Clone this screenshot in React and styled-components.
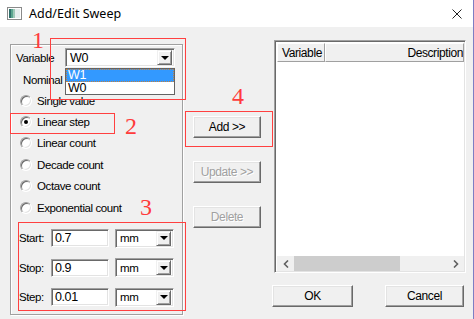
import styled, { createGlobalStyle } from "styled-components";

const GlobalStyle = createGlobalStyle`
  body {
    margin: 0;
    font-family: "Liberation Sans", Arial, sans-serif;
    font-size: 11.5px;
    letter-spacing: -0.4px;
    color: #000;
  }
`;

const Window = styled.div`
  position: relative;
  width: 473px;
  height: 319px;
  background: #f0f0f0;
  border-right: 1px solid #7e7ec4;
  overflow: hidden;
`;

const TitleBar = styled.div`
  height: 27px;
  background: #fff;
  display: flex;
  align-items: center;
  padding-left: 7px;
`;

const TitleText = styled.span`
  margin-left: 7px;
  font-family: "Noto Sans", "Open Sans", sans-serif;
  font-size: 12.5px;
  letter-spacing: 0;
  color: #000;
`;

const CloseIcon = styled.svg`
  margin-left: auto;
  margin-right: 11px;
`;

const Body = styled.div`
  display: flex;
  padding: 17px 0 0 10px;
`;

const GroupBox = styled.div`
  box-sizing: border-box;
  width: 173px;
  height: 271px;
  border: 1px solid #a0a0a0;
  box-shadow: inset 1px 1px 0 #fff, 1px 1px 0 #fff;
  padding-top: 3px;
`;

const FieldRow = styled.div`
  display: flex;
  align-items: center;
  padding-left: ${(p) => p.$indent || 0}px;
  height: ${(p) => p.$height || 19}px;
`;

const Label = styled.span`
  width: ${(p) => p.$width}px;
  flex: none;
`;

const sunken = `
  box-sizing: border-box;
  background: #fff;
  border: 1px solid;
  border-color: #a0a0a0 #fff #fff #a0a0a0;
  box-shadow: inset 1px 1px 0 #696969, inset -1px -1px 0 #e3e3e3;
`;

const Combo = styled.div`
  ${sunken}
  width: ${(p) => p.$width}px;
  height: 19px;
  margin-left: ${(p) => p.$gap || 0}px;
  display: flex;
  align-items: center;
  padding: 0 2px 0 4px;
  flex: none;
`;

const ComboValue = styled.span`
  flex: 1;
  font-size: ${(p) => p.$size || 11.5}px;
`;

const DropButton = styled.div`
  width: 15px;
  height: 15px;
  box-sizing: border-box;
  background: #f0f0f0;
  border: 1px solid;
  border-color: #f0f0f0 #696969 #696969 #f0f0f0;
  box-shadow: inset 1px 1px 0 #fff, inset -1px -1px 0 #a0a0a0;
  display: flex;
  align-items: center;
  justify-content: center;
`;

const Arrow = styled.span`
  width: 0;
  height: 0;
  border-left: 4px solid transparent;
  border-right: 4px solid transparent;
  border-top: 4px solid #000;
`;

const TextBox = styled.div`
  ${sunken}
  width: 58px;
  height: 18px;
  padding-left: 3px;
  display: flex;
  align-items: center;
  font-size: 12.5px;
  flex: none;
`;

const NominalText = styled.div`
  margin-left: 12px;
  width: 42px;
  height: 20px;
  margin-top: 3px;
  line-height: 20px;
  white-space: nowrap;
  overflow: hidden;
`;

const RadioRow = styled.div`
  display: flex;
  align-items: center;
  height: 21.4px;
  padding-left: 9px;
  gap: 5px;
`;

const RadioCircle = styled.span`
  width: 12px;
  height: 12px;
  border-radius: 50%;
  box-sizing: border-box;
  background: #fff;
  border: 1px solid;
  border-color: #a0a0a0 #fff #fff #a0a0a0;
  box-shadow: inset 1px 1px 0 #696969, inset -1px -1px 0 #e3e3e3;
  display: flex;
  align-items: center;
  justify-content: center;

  &::after {
    content: "";
    width: 4px;
    height: 4px;
    border-radius: 50%;
    background: ${(p) => (p.$checked ? "#000" : "transparent")};
  }
`;

const ValueRows = styled.div`
  margin-top: 11px;
  display: flex;
  flex-direction: column;
  gap: 11.5px;
`;

const ButtonColumn = styled.div`
  display: flex;
  flex-direction: column;
  margin-left: 10px;
  padding-top: 72px;
  gap: 23px;
`;

const Button = styled.div`
  width: ${(p) => p.$width || 68}px;
  height: 22px;
  box-sizing: border-box;
  background: #f0f0f0;
  border: 1px solid;
  border-color: #fff #696969 #696969 #fff;
  box-shadow: inset -1px -1px 0 #a0a0a0, inset 1px 1px 0 #e3e3e3;
  display: flex;
  align-items: center;
  justify-content: center;
  font-size: 12px;
  color: ${(p) => (p.$disabled ? "#a0a0a0" : "#000")};
  text-shadow: ${(p) => (p.$disabled ? "1px 1px 0 #fff" : "none")};
`;

const RightColumn = styled.div`
  margin-left: 13px;
  margin-top: -4px;
  display: flex;
  flex-direction: column;
`;

const ListView = styled.div`
  ${sunken}
  width: 192px;
  height: 233px;
  display: flex;
  flex-direction: column;
  padding: 2px 1px 1px 2px;
`;

const HeaderRow = styled.div`
  display: flex;
  height: 19px;
  background: #f0f0f0;
`;

const HeaderCell = styled.div`
  box-sizing: border-box;
  width: ${(p) => (p.$width ? `${p.$width}px` : "auto")};
  flex: ${(p) => (p.$width ? "none" : 1)};
  border: 1px solid;
  border-color: #fff #a0a0a0 #a0a0a0 #fff;
  display: flex;
  align-items: center;
  justify-content: ${(p) => (p.$right ? "flex-end" : "flex-start")};
  padding: ${(p) => (p.$right ? "0" : "0 0 0 4px")};
  font-size: 12px;
  overflow: hidden;
  white-space: nowrap;
`;

const ListArea = styled.div`
  flex: 1;
  background: #fff;
`;

const ScrollBar = styled.div`
  height: 15px;
  background: #f0f0f0;
  display: flex;
  align-items: stretch;
`;

const ScrollArrow = styled.div`
  width: 17px;
  display: flex;
  align-items: center;
  justify-content: center;
`;

const ScrollTrack = styled.div`
  flex: 1;
  display: flex;
`;

const ScrollThumb = styled.div`
  width: 106px;
  background: #cdcdcd;
`;

const DialogButtons = styled.div`
  display: flex;
  justify-content: space-between;
  margin-top: 12px;
  margin-left: -2px;
  width: 192px;
`;

const DropList = styled.div`
  position: absolute;
  left: 65px;
  top: 68px;
  width: 110px;
  height: 27px;
  box-sizing: border-box;
  background: #fff;
  border: 1px solid #646464;
`;

const DropItem = styled.div`
  height: 12.5px;
  line-height: 12.5px;
  padding-left: 2px;
  font-size: 12.5px;
  box-sizing: border-box;
  background: ${(p) => (p.$active ? "#3399ff" : "#fff")};
  color: ${(p) => (p.$active ? "#fff" : "#000")};
  outline: ${(p) => (p.$active ? "1px dotted #c08040" : "none")};
  outline-offset: -1px;
`;

const Mark = styled.div`
  position: absolute;
  left: ${(p) => p.$x}px;
  top: ${(p) => p.$y}px;
  width: ${(p) => p.$w}px;
  height: ${(p) => p.$h}px;
  border: 1px solid #ff4040;
  box-sizing: border-box;
  pointer-events: none;
`;

const MarkNumber = styled.span`
  position: absolute;
  left: ${(p) => p.$x}px;
  top: ${(p) => p.$y}px;
  font-family: "Liberation Serif", "Times New Roman", serif;
  font-size: 24px;
  line-height: 24px;
  letter-spacing: 0;
  color: #ff3b3b;
`;

const radios = [
  "Single value",
  "Linear step",
  "Linear count",
  "Decade count",
  "Octave count",
  "Exponential count",
];

const values = [
  { label: "Start:", value: "0.7" },
  { label: "Stop:", value: "0.9" },
  { label: "Step:", value: "0.01" },
];

const Chevron = ({ dir }) => (
  <svg width="6" height="8" viewBox="0 0 6 8">
    <path
      d={dir === "left" ? "M5 0.5 L1.5 4 L5 7.5" : "M1 0.5 L4.5 4 L1 7.5"}
      fill="none"
      stroke="#606060"
      strokeWidth="1.6"
    />
  </svg>
);

const App = () => {
  return (
    <>
      <GlobalStyle />
      <Window>
        <TitleBar>
          <svg width="15" height="13" viewBox="0 0 15 13">
            <rect x="0.5" y="0.5" width="14" height="12" fill="#fff" stroke="#8a8a8a" />
            <rect x="2" y="2" width="2" height="9" fill="#2f6f6a" />
            <rect x="4" y="2" width="2" height="9" fill="#5aa58f" />
            <rect x="6" y="2" width="2" height="9" fill="#9fc9b8" />
            <rect x="8" y="2" width="5" height="9" fill="#e6eeee" />
          </svg>
          <TitleText>Add/Edit Sweep</TitleText>
          <CloseIcon width="10" height="10" viewBox="0 0 10 10">
            <path d="M0.5 0.5 L9.5 9.5 M9.5 0.5 L0.5 9.5" stroke="#222" strokeWidth="1" />
          </CloseIcon>
        </TitleBar>

        <Body>
          <GroupBox>
            <FieldRow $indent={5}>
              <Label $width={49}>Variable</Label>
              <Combo $width={110}>
                <ComboValue $size={12.5}>W0</ComboValue>
                <DropButton>
                  <Arrow />
                </DropButton>
              </Combo>
            </FieldRow>
            <NominalText>Nominal value</NominalText>
            {radios.map((r) => (
              <RadioRow key={r}>
                <RadioCircle $checked={r === "Linear step"} />
                {r}
              </RadioRow>
            ))}
            <ValueRows>
              {values.map((v) => (
                <FieldRow key={v.label} $indent={8} $height={18}>
                  <Label $width={32}>{v.label}</Label>
                  <TextBox>{v.value}</TextBox>
                  <Combo $width={59} $gap={6}>
                    <ComboValue>mm</ComboValue>
                    <DropButton>
                      <Arrow />
                    </DropButton>
                  </Combo>
                </FieldRow>
              ))}
            </ValueRows>
          </GroupBox>

          <ButtonColumn>
            <Button>Add &gt;&gt;</Button>
            <Button $disabled>Update &gt;&gt;</Button>
            <Button $disabled>Delete</Button>
          </ButtonColumn>

          <RightColumn>
            <ListView>
              <HeaderRow>
                <HeaderCell $width={48}>Variable</HeaderCell>
                <HeaderCell $right>Description</HeaderCell>
              </HeaderRow>
              <ListArea />
              <ScrollBar>
                <ScrollArrow>
                  <Chevron dir="left" />
                </ScrollArrow>
                <ScrollTrack>
                  <ScrollThumb />
                </ScrollTrack>
                <ScrollArrow>
                  <Chevron dir="right" />
                </ScrollArrow>
              </ScrollBar>
            </ListView>
            <DialogButtons>
              <Button $width={81}>OK</Button>
              <Button $width={79}>Cancel</Button>
            </DialogButtons>
          </RightColumn>
        </Body>

        <DropList>
          <DropItem $active>W1</DropItem>
          <DropItem>W0</DropItem>
        </DropList>

        <Mark $x={50} $y={38} $w={136} $h={62} />
        <Mark $x={10} $y={113} $w={105} $h={21} />
        <Mark $x={18} $y={222} $w={168} $h={89} />
        <Mark $x={185} $y={111} $w={88} $h={36} />
        <MarkNumber $x={32} $y={28}>1</MarkNumber>
        <MarkNumber $x={125} $y={114}>2</MarkNumber>
        <MarkNumber $x={140} $y={195}>3</MarkNumber>
        <MarkNumber $x={232} $y={84}>4</MarkNumber>
      </Window>
    </>
  );
};

export default App;
